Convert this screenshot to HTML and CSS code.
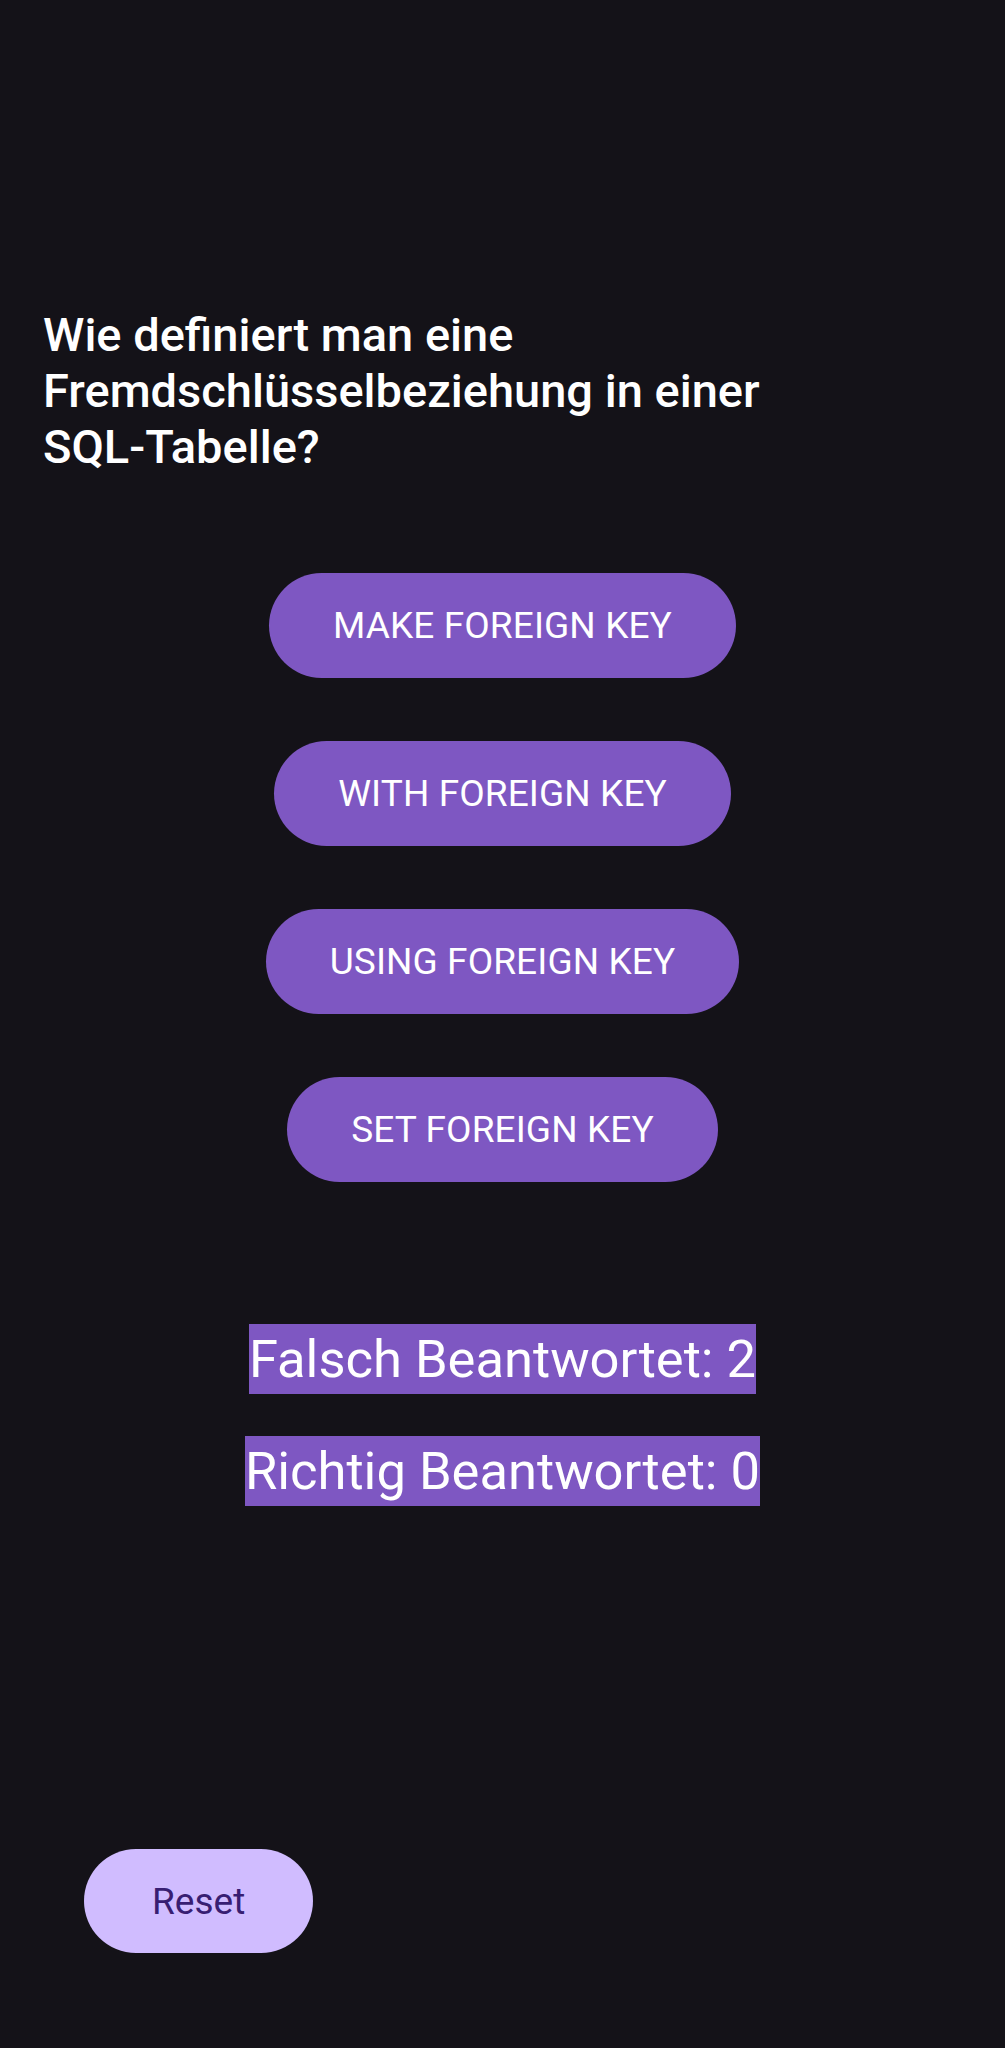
FILE: index.html
```html
<!DOCTYPE html>
<html lang="de">
<head>
<meta charset="utf-8">
<title>Quiz</title>
<link rel="stylesheet" href="styles.css">
</head>
<body>
<main class="screen">
  <h1 class="question">Wie definiert man eine Fremdschlüsselbeziehung in einer SQL-Tabelle?</h1>
  <div class="answers">
    <button class="answer">MAKE FOREIGN KEY</button>
    <button class="answer">WITH FOREIGN KEY</button>
    <button class="answer">USING FOREIGN KEY</button>
    <button class="answer">SET FOREIGN KEY</button>
  </div>
  <div class="stats">
    <span class="stat">Falsch Beantwortet: 2</span>
    <span class="stat">Richtig Beantwortet: 0</span>
  </div>
  <div class="footer">
    <button class="reset">Reset</button>
  </div>
</main>
</body>
</html>
```

FILE: styles.css
```css
html, body {
  margin: 0;
  padding: 0;
  background: #141218;
}
body {
  font-family: Roboto, "Liberation Sans", sans-serif;
  color: #ffffff;
  height: 2048px;
}
.screen {
  display: flex;
  flex-direction: column;
  padding-top: 307px;
}
.question {
  margin: 0;
  padding: 0 43px;
  font-size: 47px;
  line-height: 56px;
  font-weight: 500;
  letter-spacing: 0;
  color: #ffffff;
  max-width: 800px;
}
.answers {
  margin-top: 98px;
  display: flex;
  flex-direction: column;
  align-items: center;
  gap: 63px;
}
.answer {
  height: 105px;
  padding: 0 64px;
  border: none;
  border-radius: 53px;
  background: #7e57c2;
  color: #ffffff;
  font-family: Roboto, "Liberation Sans", sans-serif;
  font-size: 37px;
  font-weight: 400;
  letter-spacing: 0.1px;
}
.stats {
  margin-top: 142px;
  display: flex;
  flex-direction: column;
  align-items: center;
  gap: 42px;
}
.stat {
  background: #7e57c2;
  color: #ffffff;
  font-size: 52.5px;
  line-height: 70px;
  padding: 0;
}
.footer {
  margin-top: 343px;
  padding-left: 84px;
}
.reset {
  height: 104px;
  padding: 0 68px;
  border: none;
  border-radius: 52px;
  background: #d0bcff;
  color: #381e72;
  font-family: Roboto, "Liberation Sans", sans-serif;
  font-size: 37px;
  font-weight: 400;
}
```
